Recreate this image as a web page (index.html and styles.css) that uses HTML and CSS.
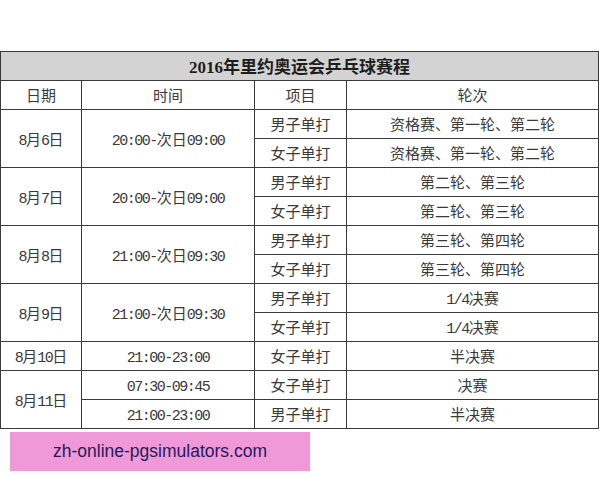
FILE: index.html
```html
<!DOCTYPE html>
<html lang="zh">
<head>
<meta charset="utf-8">
<link rel="stylesheet" href="styles.css">
</head>
<body>
<div class="sched">
  <div class="c title"><span class="tn">2016</span>年里约奥运会乒乓球赛程</div>
  <div class="c">日期</div>
  <div class="c">时间</div>
  <div class="c">项目</div>
  <div class="c">轮次</div>

  <div class="c s2"><span class="n">8</span>月<span class="n">6</span>日</div>
  <div class="c s2"><span class="n">20:00-</span>次日<span class="n">09:00</span></div>
  <div class="c">男子单打</div>
  <div class="c">资格赛、第一轮、第二轮</div>
  <div class="c">女子单打</div>
  <div class="c">资格赛、第一轮、第二轮</div>

  <div class="c s2"><span class="n">8</span>月<span class="n">7</span>日</div>
  <div class="c s2"><span class="n">20:00-</span>次日<span class="n">09:00</span></div>
  <div class="c">男子单打</div>
  <div class="c">第二轮、第三轮</div>
  <div class="c">女子单打</div>
  <div class="c">第二轮、第三轮</div>

  <div class="c s2"><span class="n">8</span>月<span class="n">8</span>日</div>
  <div class="c s2"><span class="n">21:00-</span>次日<span class="n">09:30</span></div>
  <div class="c">男子单打</div>
  <div class="c">第三轮、第四轮</div>
  <div class="c">女子单打</div>
  <div class="c">第三轮、第四轮</div>

  <div class="c s2"><span class="n">8</span>月<span class="n">9</span>日</div>
  <div class="c s2"><span class="n">21:00-</span>次日<span class="n">09:30</span></div>
  <div class="c">男子单打</div>
  <div class="c"><span class="n">1/4</span>决赛</div>
  <div class="c">女子单打</div>
  <div class="c"><span class="n">1/4</span>决赛</div>

  <div class="c"><span class="n">8</span>月<span class="n">10</span>日</div>
  <div class="c"><span class="n">21:00-23:00</span></div>
  <div class="c">女子单打</div>
  <div class="c">半决赛</div>

  <div class="c s2"><span class="n">8</span>月<span class="n">11</span>日</div>
  <div class="c"><span class="n">07:30-09:45</span></div>
  <div class="c">女子单打</div>
  <div class="c">决赛</div>
  <div class="c"><span class="n">21:00-23:00</span></div>
  <div class="c">男子单打</div>
  <div class="c">半决赛</div>
</div>
<div class="banner">zh-online-pgsimulators.com</div>
</body>
</html>
```
FILE: styles.css
```css
html, body {
  margin: 0;
  padding: 0;
  background: #ffffff;
}

.sched {
  display: grid;
  grid-template-columns: 80px 172px 91px 251px;
  grid-auto-rows: 28px;
  gap: 1px;
  padding: 1px;
  background: #3a3a3a;
  width: max-content;
  margin-top: 51px;
  font-family: "Noto Sans CJK SC", sans-serif;
  font-size: 15px;
  color: #3a3a3a;
}

.c {
  background: #ffffff;
  text-align: center;
  line-height: 28px;
  white-space: nowrap;
}

.s2 {
  grid-row: span 2;
  line-height: 57px;
}

.title {
  grid-column: 1 / -1;
  background: #d3d3d3;
  font-weight: bold;
  font-size: 17px;
  color: #1e1e1e;
}

.tn {
  font-family: "Liberation Serif", serif;
  font-weight: bold;
  font-size: 17px;
}

.n {
  font-family: "Liberation Mono", monospace;
  font-size: 15px;
  letter-spacing: -1.5px;
}

.banner {
  margin: 3px 0 0 10px;
  width: 300px;
  height: 39px;
  background: #ef99d8;
  color: #2a1858;
  font-family: "Liberation Sans", Arial, sans-serif;
  font-size: 17.5px;
  display: flex;
  align-items: center;
  justify-content: center;
}
```
